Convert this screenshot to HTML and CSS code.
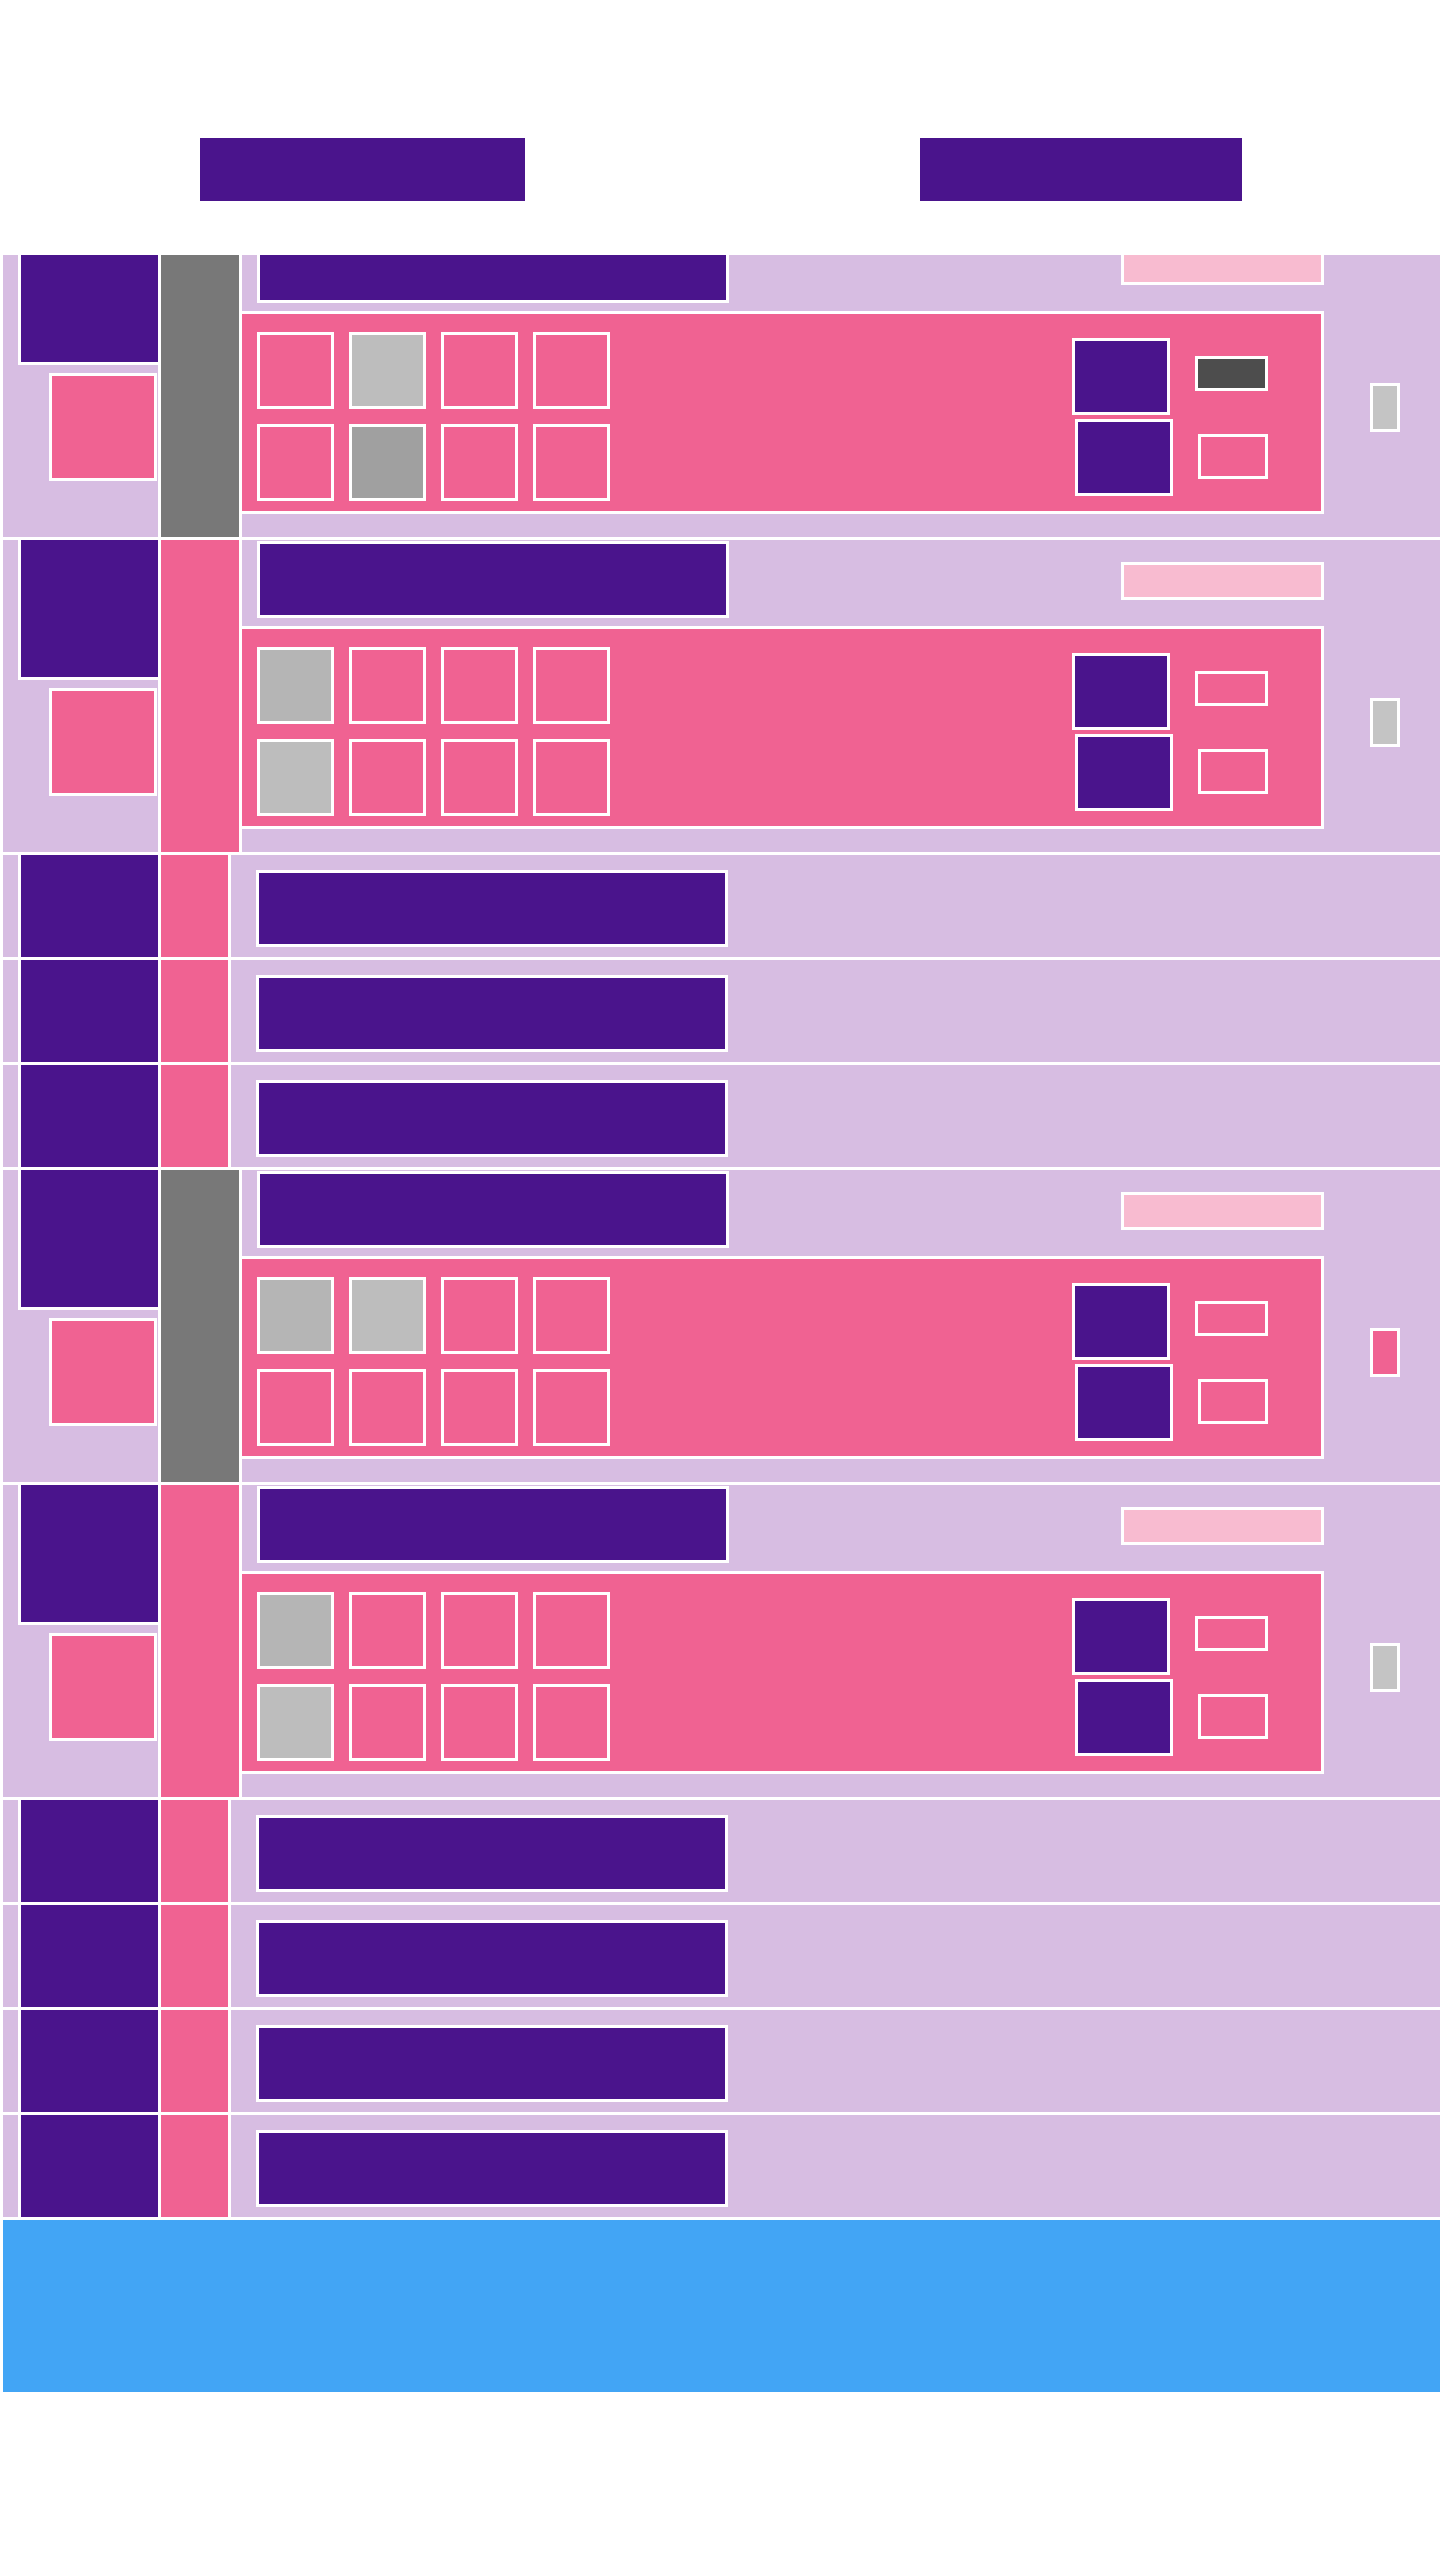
FILE: index.html
```html
<!DOCTYPE html>
<html lang="en">
<head>
<meta charset="utf-8">
<title>Layout</title>
<link rel="stylesheet" href="styles.css">
</head>
<body>
<header class="top">
  <div class="top-bar"></div>
  <div class="top-bar top-bar-b"></div>
</header>
<main class="table">
  <div class="row row-open row-first">
    <div class="c1"><div class="thumb"></div><div class="badge"></div></div>
    <div class="c2 c2-gray"></div>
    <div class="c3">
      <div class="c3-main">
        <div class="head"><div class="title"></div><div class="tag"></div></div>
        <div class="panel">
          <div class="grid">
            <div class="cell"></div><div class="cell g-bd"></div><div class="cell"></div><div class="cell"></div>
            <div class="cell"></div><div class="cell g-a0"></div><div class="cell"></div><div class="cell"></div>
          </div>
          <div class="stack"><div class="sq"></div><div class="sq sq-b"></div></div>
          <div class="mini"><div class="mini-a g-dark"></div><div class="mini-b"></div></div>
        </div>
      </div>
      <div class="side"><div class="flag"></div></div>
    </div>
  </div>
  <div class="row row-open">
    <div class="c1"><div class="thumb"></div><div class="badge"></div></div>
    <div class="c2 c2-pink"></div>
    <div class="c3">
      <div class="c3-main">
        <div class="head"><div class="title"></div><div class="tag"></div></div>
        <div class="panel">
          <div class="grid">
            <div class="cell g-b5"></div><div class="cell"></div><div class="cell"></div><div class="cell"></div>
            <div class="cell g-bd"></div><div class="cell"></div><div class="cell"></div><div class="cell"></div>
          </div>
          <div class="stack"><div class="sq"></div><div class="sq sq-b"></div></div>
          <div class="mini"><div class="mini-a"></div><div class="mini-b"></div></div>
        </div>
      </div>
      <div class="side"><div class="flag"></div></div>
    </div>
  </div>
  <div class="row row-closed">
    <div class="c1"><div class="thumb"></div></div>
    <div class="c2 c2-pink"></div>
    <div class="c3"><div class="title"></div></div>
  </div>
  <div class="row row-closed">
    <div class="c1"><div class="thumb"></div></div>
    <div class="c2 c2-pink"></div>
    <div class="c3"><div class="title"></div></div>
  </div>
  <div class="row row-closed">
    <div class="c1"><div class="thumb"></div></div>
    <div class="c2 c2-pink"></div>
    <div class="c3"><div class="title"></div></div>
  </div>
  <div class="row row-open">
    <div class="c1"><div class="thumb"></div><div class="badge"></div></div>
    <div class="c2 c2-gray"></div>
    <div class="c3">
      <div class="c3-main">
        <div class="head"><div class="title"></div><div class="tag"></div></div>
        <div class="panel">
          <div class="grid">
            <div class="cell g-b5"></div><div class="cell g-bd"></div><div class="cell"></div><div class="cell"></div>
            <div class="cell"></div><div class="cell"></div><div class="cell"></div><div class="cell"></div>
          </div>
          <div class="stack"><div class="sq"></div><div class="sq sq-b"></div></div>
          <div class="mini"><div class="mini-a"></div><div class="mini-b"></div></div>
        </div>
      </div>
      <div class="side"><div class="flag flag-pink"></div></div>
    </div>
  </div>
  <div class="row row-open">
    <div class="c1"><div class="thumb"></div><div class="badge"></div></div>
    <div class="c2 c2-pink"></div>
    <div class="c3">
      <div class="c3-main">
        <div class="head"><div class="title"></div><div class="tag"></div></div>
        <div class="panel">
          <div class="grid">
            <div class="cell g-b5"></div><div class="cell"></div><div class="cell"></div><div class="cell"></div>
            <div class="cell g-bd"></div><div class="cell"></div><div class="cell"></div><div class="cell"></div>
          </div>
          <div class="stack"><div class="sq"></div><div class="sq sq-b"></div></div>
          <div class="mini"><div class="mini-a"></div><div class="mini-b"></div></div>
        </div>
      </div>
      <div class="side"><div class="flag"></div></div>
    </div>
  </div>
  <div class="row row-closed">
    <div class="c1"><div class="thumb"></div></div>
    <div class="c2 c2-pink"></div>
    <div class="c3"><div class="title"></div></div>
  </div>
  <div class="row row-closed">
    <div class="c1"><div class="thumb"></div></div>
    <div class="c2 c2-pink"></div>
    <div class="c3"><div class="title"></div></div>
  </div>
  <div class="row row-closed">
    <div class="c1"><div class="thumb"></div></div>
    <div class="c2 c2-pink"></div>
    <div class="c3"><div class="title"></div></div>
  </div>
  <div class="row row-closed">
    <div class="c1"><div class="thumb"></div></div>
    <div class="c2 c2-pink"></div>
    <div class="c3"><div class="title"></div></div>
  </div>
</main>
<footer class="foot"></footer>
</body>
</html>
```

FILE: styles.css
```css
* {
  box-sizing: border-box;
  margin: 0;
  padding: 0;
}

body {
  margin: 0;
  background: #ffffff;
  width: 1440px;
  font-family: "Liberation Sans", Arial, sans-serif;
}

.top {
  height: 255px;
  margin-left: 3px;
  display: grid;
  grid-template-columns: 1fr 1fr;
  justify-items: center;
  align-items: start;
  padding-top: 138px;
}

.top-bar {
  width: 325px;
  height: 63px;
  background: #4a148c;
}

.top-bar-b {
  width: 322px;
}

.table {
  margin-left: 3px;
  overflow: hidden;
  display: flex;
  flex-direction: column;
  gap: 3px;
  background: #ffffff;
}

.row {
  display: grid;
  column-gap: 3px;
  background: #ffffff;
}

.row-open {
  height: 312px;
  grid-template-columns: 155px 78px 1fr;
}

.row-closed {
  height: 102px;
  grid-template-columns: 155px 67px 1fr;
}

.row-first {
  margin-top: -30px;
}

.c1 {
  background: #d7bde2;
  display: flex;
  flex-direction: column;
}

.thumb {
  margin-left: 15px;
  width: 140px;
  background: #4a148c;
  border-left: 3px solid #ffffff;
}

.row-open .thumb {
  height: 140px;
  border-bottom: 3px solid #ffffff;
}

.row-closed .thumb {
  flex: 1;
}

.badge {
  margin: 8px 0 0 46px;
  width: 108px;
  height: 108px;
  background: #f06292;
  border: 3px solid #ffffff;
}

.c2-gray {
  background: #787878;
}

.c2-pink {
  background: #f06292;
}

.c3 {
  background: #d7bde2;
  display: flex;
  align-items: flex-start;
}

.c3-main {
  width: 1082px;
  display: flex;
  flex-direction: column;
}

.head {
  height: 86px;
  display: flex;
  justify-content: space-between;
  align-items: flex-start;
}

.title {
  margin: 1px 0 0 15px;
  width: 472px;
  height: 77px;
  background: #4a148c;
  border: 3px solid #ffffff;
}

.row-closed .title {
  margin: 15px 0 0 25px;
}

.tag {
  margin-top: 22px;
  width: 203px;
  height: 38px;
  background: #f8bbd0;
  border: 3px solid #ffffff;
}

.panel {
  height: 203px;
  background: #f06292;
  border: 3px solid #ffffff;
  border-left: 0;
  display: flex;
  align-items: flex-start;
  padding: 18px 53px 0 15px;
}

.grid {
  display: grid;
  grid-template-columns: repeat(4, 77px);
  grid-template-rows: 77px 77px;
  gap: 15px;
}

.cell {
  background: #f06292;
  border: 3px solid #ffffff;
}

.g-bd {
  background: #bdbdbd;
}

.g-a0 {
  background: #a0a0a0;
}

.g-b5 {
  background: #b5b5b5;
}

.stack {
  margin: 6px 0 0 auto;
  display: flex;
  flex-direction: column;
  align-items: flex-start;
  gap: 4px;
}

.sq {
  width: 98px;
  height: 77px;
  background: #4a148c;
  border: 3px solid #ffffff;
}

.sq-b {
  margin-left: 3px;
}

.mini {
  margin: 24px 0 0 22px;
  width: 73px;
  display: flex;
  flex-direction: column;
  align-items: flex-start;
}

.mini-a {
  width: 73px;
  height: 35px;
  background: #f06292;
  border: 3px solid #ffffff;
}

.mini-a.g-dark {
  background: #4d4d4d;
}

.mini-b {
  margin: 43px 0 0 3px;
  width: 70px;
  height: 45px;
  background: #f06292;
  border: 3px solid #ffffff;
}

.side {
  flex: 1;
}

.flag {
  margin: 158px 0 0 46px;
  width: 30px;
  height: 49px;
  background: #c4c4c4;
  border: 3px solid #ffffff;
}

.flag-pink {
  background: #f06292;
}

.foot {
  margin: 3px 0 0 3px;
  height: 172px;
  background: #42a5f5;
}
```
